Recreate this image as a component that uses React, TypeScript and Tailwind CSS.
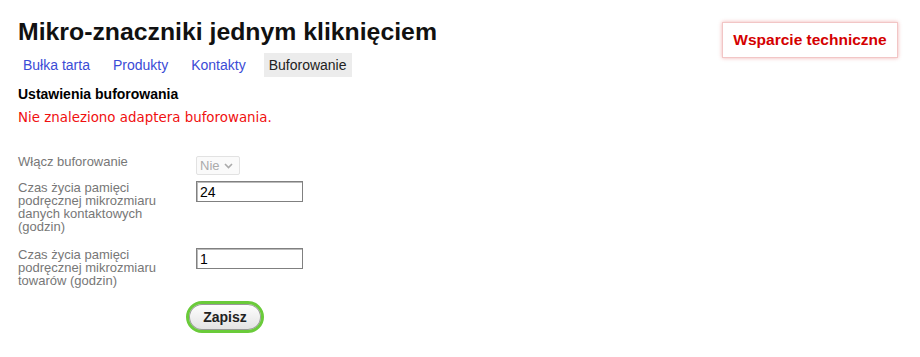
import React from 'react';

const tabs = ['Bułka tarta', 'Produkty', 'Kontakty', 'Buforowanie'];

const App: React.FC = () => {
  return (
    <div className="min-h-[357px] bg-white pl-[18px] pr-[22px] font-['Liberation_Sans',Arial,sans-serif] text-black">
      <div className="flex items-start justify-between">
        <div>
          <h1 className="pt-[17px] text-[24.8px] font-bold leading-[29px] text-[#111]">
            Mikro-znaczniki jednym kliknięciem
          </h1>
          <nav className="mt-[7px] flex gap-[13px]">
            {tabs.map((t) =>
              t === 'Buforowanie' ? (
                <span key={t} className="bg-[#ececec] px-[5px] py-1 text-[14px] leading-4 text-[#222]">
                  {t}
                </span>
              ) : (
                <a key={t} href="#" className="px-[5px] py-1 text-[14px] leading-4 text-[#3b4bd6]">
                  {t}
                </a>
              )
            )}
          </nav>
        </div>
        <a
          href="#"
          className="mt-[22px] flex h-[36px] w-[176px] items-center justify-center border border-[#f2c6c6] bg-white text-[15.5px] font-bold text-[#d40000] shadow-[0_0_4px_rgba(210,0,0,0.3)]"
        >
          Wsparcie techniczne
        </a>
      </div>

      <h2 className="mt-[9px] text-[14px] font-bold leading-4">Ustawienia buforowania</h2>
      <p className="mt-[8px] font-['DejaVu_Sans',sans-serif] text-[13.4px] leading-4 text-[#f01010]">
        Nie znaleziono adaptera buforowania.
      </p>

      <div className="mt-[29px] text-[13px] leading-[13px] text-[#777]">
        <div className="flex items-start">
          <label className="w-[178px]">Włącz buforowanie</label>
          <div className="mt-[1px] flex h-[19px] w-[44px] items-center gap-[4px] rounded-[2px] border border-[#e2e2e2] bg-[#fafafa] pl-[3px] text-[13px] text-[#aaa]">
            <span>Nie</span>
            <svg width="9" height="6" viewBox="0 0 9 6" fill="none">
              <path d="M1 1l3.5 3.5L8 1" stroke="#aaa" strokeWidth="1.6" />
            </svg>
          </div>
        </div>

        <div className="mt-[6px] flex items-start">
          <label className="w-[178px] pr-[20px]">
            Czas życia pamięci podręcznej mikrozmiaru danych kontaktowych (godzin)
          </label>
          <input
            defaultValue="24"
            className="h-[21px] w-[107px] border border-[#808080] px-[3px] text-[14px] text-black shadow-[inset_1px_1px_0_#bbb] outline-none"
          />
        </div>

        <div className="mt-[15px] flex items-start">
          <label className="w-[178px] pr-[20px]">
            Czas życia pamięci podręcznej mikrozmiaru towarów (godzin)
          </label>
          <input
            defaultValue="1"
            className="h-[21px] w-[107px] border border-[#808080] px-[3px] text-[14px] text-black shadow-[inset_1px_1px_0_#bbb] outline-none"
          />
        </div>

        <button className="mt-[14px] ml-[168px] flex h-[32px] w-[78px] items-center justify-center rounded-full border-[3px] border-[#6acb3a] bg-gradient-to-b from-white to-[#e2e2e2] text-[14px] font-bold text-[#222] shadow-[inset_0_0_0_1px_#999]">
          Zapisz
        </button>
      </div>
    </div>
  );
};

export default App;
